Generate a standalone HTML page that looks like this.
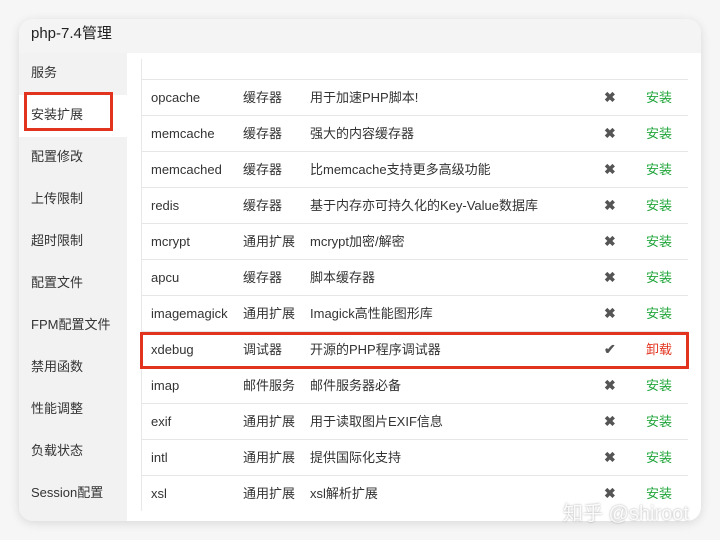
<!DOCTYPE html>
<html><head><meta charset="utf-8"><style>
*{margin:0;padding:0;box-sizing:border-box}
body{width:720px;height:540px;background:#f6f6f6;font-family:"Liberation Sans","Noto Sans CJK SC",sans-serif;font-size:13px;color:#333;position:relative;overflow:hidden}
.win{position:absolute;left:19px;top:19px;width:682px;height:502px;background:#fff;border-radius:14px;overflow:hidden;box-shadow:0 2px 10px rgba(0,0,0,.12)}
.title{height:34px;background:#f4f4f4;font-size:15px;padding:3px 0 0 12px;color:#222}
.side{position:absolute;left:0;top:34px;width:108px;bottom:0;background:#f2f2f2}
.side div{height:42px;line-height:40px;padding-left:12px;font-size:13px;color:#333}
.side .act{background:#fff}
.tbl{position:absolute;left:122px;top:40px;width:547px;border-left:1px solid #e8e8e8}
.row{height:36px;border-top:1px solid #e6e6e6;position:relative}
.row span{position:absolute;top:0;height:35px;line-height:35px;font-size:13px}
.n{left:9px}.t{left:101px}.d{left:168px}
.row .i{left:462px;color:#555;font-size:14px;font-weight:bold}
.a{left:504px;color:#20a53a}
.rb{position:absolute;border:3px solid #e2331f}
.wm{position:absolute;left:563px;top:497px;font-size:20px;color:rgba(255,255,255,.9);text-shadow:0 0 2px rgba(0,0,0,.35)}
</style></head><body>
<div class="win">
<div class="title">php-7.4管理</div>
<div class="side">
<div>服务</div><div class="act">安装扩展</div><div>配置修改</div><div>上传限制</div><div>超时限制</div><div>配置文件</div><div>FPM配置文件</div><div>禁用函数</div><div>性能调整</div><div>负载状态</div><div>Session配置</div>
</div>
<div class="tbl">
<div class="row" style="height:20px;border-top:none"></div>
<div class="row"><span class="n">opcache</span><span class="t">缓存器</span><span class="d">用于加速PHP脚本!</span><span class="i">✖</span><span class="a">安装</span></div>
<div class="row"><span class="n">memcache</span><span class="t">缓存器</span><span class="d">强大的内容缓存器</span><span class="i">✖</span><span class="a">安装</span></div>
<div class="row"><span class="n">memcached</span><span class="t">缓存器</span><span class="d">比memcache支持更多高级功能</span><span class="i">✖</span><span class="a">安装</span></div>
<div class="row"><span class="n">redis</span><span class="t">缓存器</span><span class="d">基于内存亦可持久化的Key-Value数据库</span><span class="i">✖</span><span class="a">安装</span></div>
<div class="row"><span class="n">mcrypt</span><span class="t">通用扩展</span><span class="d">mcrypt加密/解密</span><span class="i">✖</span><span class="a">安装</span></div>
<div class="row"><span class="n">apcu</span><span class="t">缓存器</span><span class="d">脚本缓存器</span><span class="i">✖</span><span class="a">安装</span></div>
<div class="row"><span class="n">imagemagick</span><span class="t">通用扩展</span><span class="d">Imagick高性能图形库</span><span class="i">✖</span><span class="a">安装</span></div>
<div class="row"><span class="n">xdebug</span><span class="t">调试器</span><span class="d">开源的PHP程序调试器</span><span class="i">✔</span><span class="a" style="color:#e2331f">卸载</span></div>
<div class="row"><span class="n">imap</span><span class="t">邮件服务</span><span class="d">邮件服务器必备</span><span class="i">✖</span><span class="a">安装</span></div>
<div class="row"><span class="n">exif</span><span class="t">通用扩展</span><span class="d">用于读取图片EXIF信息</span><span class="i">✖</span><span class="a">安装</span></div>
<div class="row"><span class="n">intl</span><span class="t">通用扩展</span><span class="d">提供国际化支持</span><span class="i">✖</span><span class="a">安装</span></div>
<div class="row"><span class="n">xsl</span><span class="t">通用扩展</span><span class="d">xsl解析扩展</span><span class="i">✖</span><span class="a">安装</span></div>
</div>
</div>
<div class="rb" style="left:24px;top:92px;width:89px;height:39px"></div>
<div class="rb" style="left:140px;top:332px;width:549px;height:37px"></div>
<div class="wm">知乎 @shiroot</div>
</body></html>
